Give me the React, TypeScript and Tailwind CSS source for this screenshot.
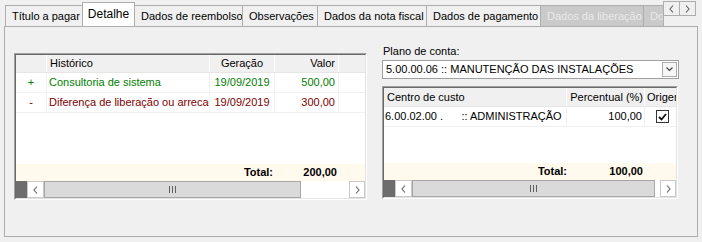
import React from 'react'

const font = "font-['Liberation_Sans',Arial,sans-serif] text-[11px] leading-none"

const tabs = [
  { label: 'Título a pagar', w: 'w-[78px]', state: 'normal' },
  { label: 'Detalhe', w: 'w-[53px]', state: 'active' },
  { label: 'Dados de reembolso', w: 'w-[109px]', state: 'normal' },
  { label: 'Observações', w: 'w-[76px]', state: 'normal' },
  { label: 'Dados da nota fiscal', w: 'w-[110px]', state: 'normal' },
  { label: 'Dados de pagamento', w: 'w-[115px]', state: 'normal' },
  { label: 'Dados da liberação', w: 'w-[104px]', state: 'disabled' },
  { label: 'Docum', w: 'w-[21px]', state: 'disabled' },
]

function Chevron({ dir }: { dir: 'left' | 'right' }) {
  return (
    <svg width="5" height="8" viewBox="0 0 5 8">
      <path
        d={dir === 'left' ? 'M4 0.5 L1 4 L4 7.5' : 'M1 0.5 L4 4 L1 7.5'}
        fill="none"
        stroke="#606060"
        strokeWidth="1.1"
      />
    </svg>
  )
}

function ScrollBar({ thumb, track }: { thumb: string; track: string }) {
  return (
    <div className="flex h-[17px] shrink-0 bg-white">
      <div className="w-[11px] bg-[#6d6d6d]" />
      <div className="w-[17px] flex items-center justify-center border border-[#c8c8c8]">
        <Chevron dir="left" />
      </div>
      <div className={`${thumb} bg-[#dadada] border border-[#a6a6a6] flex items-center justify-center`}>
        <div className="flex gap-[2px]">
          <div className="w-px h-[7px] bg-[#606060]" />
          <div className="w-px h-[7px] bg-[#606060]" />
          <div className="w-px h-[7px] bg-[#606060]" />
        </div>
      </div>
      <div className={`${track}`} />
      <div className="w-[16px] flex items-center justify-center border border-[#c8c8c8]">
        <Chevron dir="right" />
      </div>
    </div>
  )
}

function LeftGrid() {
  return (
    <div className="mt-[26px] w-[353px] h-[147px] border border-t-[#a0a0a0] border-l-[#a0a0a0] border-r-white border-b-white">
      <div className="h-full flex flex-col bg-white border border-t-[#696969] border-l-[#696969] border-r-[#e3e3e3] border-b-[#e3e3e3]">
        <div className="flex h-[18px] bg-[#f0f0f0] border-b border-[#e6e6e6]">
          <div className="w-[31px] border-r border-white" />
          <div className="w-[163px] pl-[3px] flex items-center border-r border-white">Histórico</div>
          <div className="w-[65px] flex items-center justify-center border-r border-white">Geração</div>
          <div className="w-[64px] flex items-center justify-end pr-[3px] border-r border-white">Valor</div>
          <div className="flex-1" />
        </div>
        <div className="flex h-[20px] border-b border-[#f0f0f0] text-[#008000]">
          <div className="w-[31px] flex items-center justify-center border-r border-[#f0f0f0]">+</div>
          <div className="w-[163px] pl-[2px] flex items-center border-r border-[#f0f0f0] overflow-hidden whitespace-nowrap">Consultoria de sistema</div>
          <div className="w-[65px] flex items-center justify-center border-r border-[#f0f0f0]">19/09/2019</div>
          <div className="w-[64px] flex items-center justify-end pr-[3px] border-r border-[#f0f0f0]">500,00</div>
          <div className="flex-1" />
        </div>
        <div className="flex h-[20px] border-b border-[#f0f0f0] text-[#800000]">
          <div className="w-[31px] flex items-center justify-center border-r border-[#f0f0f0]">-</div>
          <div className="w-[163px] pl-[2px] flex items-center border-r border-[#f0f0f0] overflow-hidden whitespace-nowrap">Diferença de liberação ou arrecad</div>
          <div className="w-[65px] flex items-center justify-center border-r border-[#f0f0f0]">19/09/2019</div>
          <div className="w-[64px] flex items-center justify-end pr-[3px] border-r border-[#f0f0f0]">300,00</div>
          <div className="flex-1" />
        </div>
        <div className="flex-1" />
        <div className="flex h-[17px] bg-[#fff9ee] font-bold text-black">
          <div className="w-[194px]" />
          <div className="w-[65px] flex items-center justify-end pr-[2px]">Total:</div>
          <div className="w-[64px] flex items-center justify-end pr-[2px]">200,00</div>
          <div className="flex-1" />
        </div>
        <ScrollBar thumb="w-[257px]" track="flex-1" />
      </div>
    </div>
  )
}

function RightGrid() {
  return (
    <div className="mt-[7px] w-[296px] h-[113px] border border-t-[#a0a0a0] border-l-[#a0a0a0] border-r-white border-b-white">
      <div className="h-full flex flex-col bg-white border border-t-[#696969] border-l-[#696969] border-r-[#e3e3e3] border-b-[#e3e3e3]">
        <div className="flex h-[19px] bg-[#f0f0f0] border-b border-[#e6e6e6] overflow-hidden whitespace-nowrap">
          <div className="w-[183px] shrink-0 pl-[3px] flex items-center border-r border-white">Centro de custo</div>
          <div className="w-[78px] shrink-0 flex items-center justify-end pr-[1px] border-r border-white">Percentual (%)</div>
          <div className="flex-1 min-w-0 overflow-hidden pl-[2px] flex items-center">Origem</div>
        </div>
        <div className="flex h-[20px] border-b border-[#f0f0f0] text-black">
          <div className="w-[183px] shrink-0 pl-[1px] flex items-center border-r border-[#f0f0f0] whitespace-pre">6.00.02.00 .      :: ADMINISTRAÇÃO</div>
          <div className="w-[78px] shrink-0 flex items-center justify-end pr-[2px] border-r border-[#f0f0f0]">100,00</div>
          <div className="flex-1 flex items-center pl-[11px]">
            <div className="w-[13px] h-[13px] border border-[#333] bg-white flex items-center justify-center">
              <svg width="9" height="8" viewBox="0 0 9 8">
                <path d="M1 4 L3.5 6.5 L8 1" fill="none" stroke="#111" strokeWidth="1.8" />
              </svg>
            </div>
          </div>
        </div>
        <div className="flex-1" />
        <div className="flex h-[17px] bg-[#fff9ee] font-bold text-black">
          <div className="w-[151px]" />
          <div className="w-[32px] flex items-center justify-end">Total:</div>
          <div className="w-[78px] flex items-center justify-end pr-[2px]">100,00</div>
          <div className="flex-1" />
        </div>
        <ScrollBar thumb="w-[246px]" track="w-[5px]" />
      </div>
    </div>
  )
}

export default function App() {
  return (
    <div className={`relative w-[702px] h-[242px] bg-[#f0f0f0] pt-[2px] text-black ${font}`}>
      {/* abas */}
      <div className="flex items-end h-[24px] pl-[5px] overflow-hidden">
        {tabs.map((t, i) => (
          <div
            key={t.label}
            className={`${t.w} shrink-0 flex items-center whitespace-nowrap overflow-hidden border border-b-0 border-[#adadad] ${
              i > 0 ? '-ml-px' : ''
            } ${
              t.state === 'active'
                ? 'relative z-10 h-[25px] -mb-px bg-white justify-center pb-[3px] text-[12px]'
                : t.state === 'disabled'
                ? 'h-[21px] bg-[#cacaca] text-[#e9e9e9] pl-[6px]'
                : 'h-[21px] bg-[#f0f0f0] pl-[6px]'
            }`}
          >
            {t.label}
          </div>
        ))}
      </div>
      <div className="absolute top-[1px] left-[663px] flex">
        <div className="w-[17px] h-[15px] bg-[#f0f0f0] border border-[#adadad] flex items-center justify-center">
          <Chevron dir="left" />
        </div>
        <div className="w-[17px] h-[15px] -ml-px bg-[#f0f0f0] border border-[#adadad] flex items-center justify-center">
          <Chevron dir="right" />
        </div>
      </div>

      {/* painel */}
      <div className="ml-[4px] w-[694px] h-[211px] border border-[#adadad] bg-[#f0f0f0] flex pl-[9px]">
        <LeftGrid />
        <div className="ml-[15px] mt-[19px] flex flex-col">
          <div className="pl-[1px] h-[14px]">Plano de conta:</div>
          <div className="w-[297px] h-[19px] bg-white border border-[#a0a0a0] flex items-center pl-[3px] pr-[1px]">
            <span className="flex-1 whitespace-nowrap">5.00.00.06 :: MANUTENÇÃO DAS INSTALAÇÕES</span>
            <div className="w-[15px] h-[15px] border border-[#adadad] bg-[#f6f6f6] flex items-center justify-center">
              <svg width="7" height="5" viewBox="0 0 7 5">
                <path d="M0.5 0.5 L3.5 3.5 L6.5 0.5" fill="none" stroke="#444" strokeWidth="1.2" />
              </svg>
            </div>
          </div>
          <RightGrid />
        </div>
      </div>
    </div>
  )
}
